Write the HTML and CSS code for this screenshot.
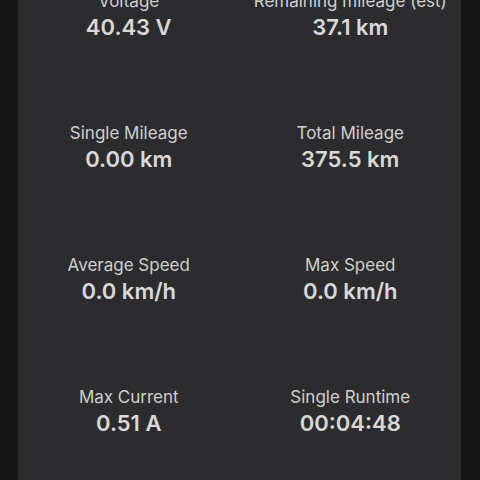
FILE: index.html
```html
<!DOCTYPE html>
<html lang="en">
<head>
    <meta charset="UTF-8">
    <meta name="viewport" content="width=device-width, initial-scale=1.0">
    <title>Scooter Stats</title>
    <link rel="stylesheet" href="styles.css">
</head>
<body>

<div id="stats-panel">
    <div class="stat">
        <div class="stat-label">Voltage</div>
        <div class="stat-value">40.43 V</div>
    </div>
    <div class="stat">
        <div class="stat-label">Remaining mileage (est)</div>
        <div class="stat-value">37.1 km</div>
    </div>
    <div class="stat">
        <div class="stat-label">Single Mileage</div>
        <div class="stat-value">0.00 km</div>
    </div>
    <div class="stat">
        <div class="stat-label">Total Mileage</div>
        <div class="stat-value">375.5 km</div>
    </div>
    <div class="stat">
        <div class="stat-label">Average Speed</div>
        <div class="stat-value">0.0 km/h</div>
    </div>
    <div class="stat">
        <div class="stat-label">Max Speed</div>
        <div class="stat-value">0.0 km/h</div>
    </div>
    <div class="stat">
        <div class="stat-label">Max Current</div>
        <div class="stat-value">0.51 A</div>
    </div>
    <div class="stat">
        <div class="stat-label">Single Runtime</div>
        <div class="stat-value">00:04:48</div>
    </div>
</div>

</body>
</html>
```

FILE: styles.css
```css
body {
    margin: 0;
    height: 100vh;
    overflow: hidden;
    background: #161616;
    font-family: 'Inter', 'Liberation Sans', sans-serif;
    color: #d8d8d8;
}

#stats-panel {
    margin: -50px 19px 0 18px; /* page is scrolled, first row is cut off */
    padding-bottom: 20px;
    background: #2c2c2e;
    display: grid;
    grid-template-columns: 1fr 1fr;
}

.stat {
    height: 132px;
    padding-top: 41px;
    box-sizing: border-box;
    text-align: center;
}

.stat-label {
    font-size: 17px;
    line-height: 20px;
    color: #cfcfcf;
}

.stat-value {
    margin-top: 3px;
    font-size: 22px;
    line-height: 26px;
    font-weight: 600;
}
```
